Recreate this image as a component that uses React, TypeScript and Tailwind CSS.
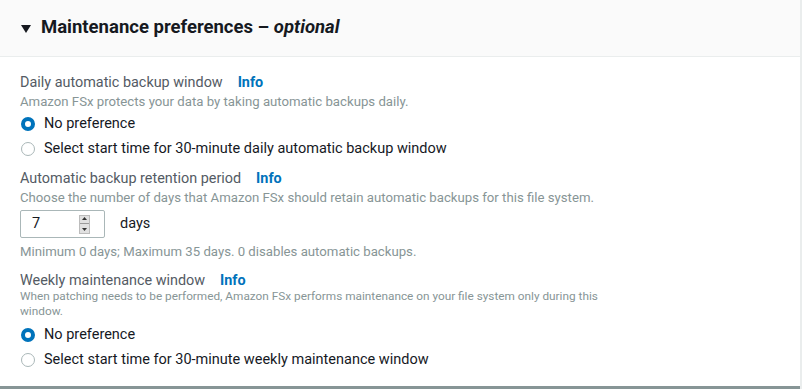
import type { ReactNode } from 'react';

function Label({ children }: { children: ReactNode }) {
  return (
    <div className="flex items-center h-[20px] text-[14.4px] text-[#545b64]">
      <span>{children}</span>
      <span className="ml-[15px] font-bold text-[#0073bb]">Info</span>
    </div>
  );
}

function Desc({ children, className = '' }: { children: ReactNode; className?: string }) {
  return <p className={`leading-[15px] text-[#879596] ${className}`}>{children}</p>;
}

function Radio({ checked, children }: { checked?: boolean; children: ReactNode }) {
  return (
    <label className="flex items-center h-[25px] text-[14.5px] text-[#16191f]">
      {checked ? (
        <span className="w-[14px] h-[14px] rounded-full border-[4px] border-[#0073bb] bg-white ml-[1px]" />
      ) : (
        <span className="w-[14px] h-[14px] rounded-full border border-[#aab7b8] bg-white ml-[1px]" />
      )}
      <span className="ml-[9px]">{children}</span>
    </label>
  );
}

export default function App() {
  return (
    <div className="w-[802px] h-[389px] bg-[#eaeded] font-['Roboto',sans-serif] overflow-hidden">
      <div className="w-[800px] h-[386px] bg-white border-b-[3px] border-[#879596] box-content">
        {/* Header */}
        <div className="h-[57px] bg-[#fafafa] border-b border-[#eaeded] flex items-center pl-[21px]">
          <svg width="10" height="8" viewBox="0 0 10 8" className="mt-[1px]">
            <path d="M0 0 L10 0 L5 8 Z" fill="#16191f" />
          </svg>
          <h2 className="ml-[10px] text-[18.5px] font-bold text-[#16191f]">
            Maintenance preferences – <i>optional</i>
          </h2>
        </div>

        <div className="px-[20px] pt-[16px]">
          <Label>Daily automatic backup window</Label>
          <Desc className="mt-[1px] text-[13.2px]">Amazon FSx protects your data by taking automatic backups daily.</Desc>
          <div className="mt-[2px]">
            <Radio checked>No preference</Radio>
            <Radio>Select start time for 30-minute daily automatic backup window</Radio>
          </div>

          <div className="mt-[8px]">
            <Label>Automatic backup retention period</Label>
            <Desc className="mt-[1px] text-[13.2px]">Choose the number of days that Amazon FSx should retain automatic backups for this file system.</Desc>
          </div>
          <div className="flex items-center mt-[5px]">
            <div className="w-[85px] h-[28px] border border-[#aab7b8] rounded-[2px] flex items-center pl-[11px] pr-[14px]">
              <span className="text-[14.5px] text-[#16191f] flex-1">7</span>
              <div className="w-[11px] h-[19px] bg-[#e1e1e1] border border-[#bcbcbc] flex flex-col items-center justify-around">
                <svg width="5" height="3" viewBox="0 0 5 3"><path d="M0 3 L5 3 L2.5 0 Z" fill="#333" /></svg>
                <div className="w-full h-px bg-[#9a9a9a]" />
                <svg width="5" height="3" viewBox="0 0 5 3"><path d="M0 0 L5 0 L2.5 3 Z" fill="#333" /></svg>
              </div>
            </div>
            <span className="ml-[15px] text-[14.5px] text-[#16191f]">days</span>
          </div>
          <Desc className="mt-[6px] text-[13.2px]">Minimum 0 days; Maximum 35 days. 0 disables automatic backups.</Desc>

          <div className="mt-[12px]">
            <Label>Weekly maintenance window</Label>
            <Desc className="-mt-[2px] w-[610px] text-[11.8px]">
              When patching needs to be performed, Amazon FSx performs maintenance on your file system only during this window.
            </Desc>
          </div>
          <div className="mt-[3px]">
            <Radio checked>No preference</Radio>
            <Radio>Select start time for 30-minute weekly maintenance window</Radio>
          </div>
        </div>
      </div>
    </div>
  );
}
